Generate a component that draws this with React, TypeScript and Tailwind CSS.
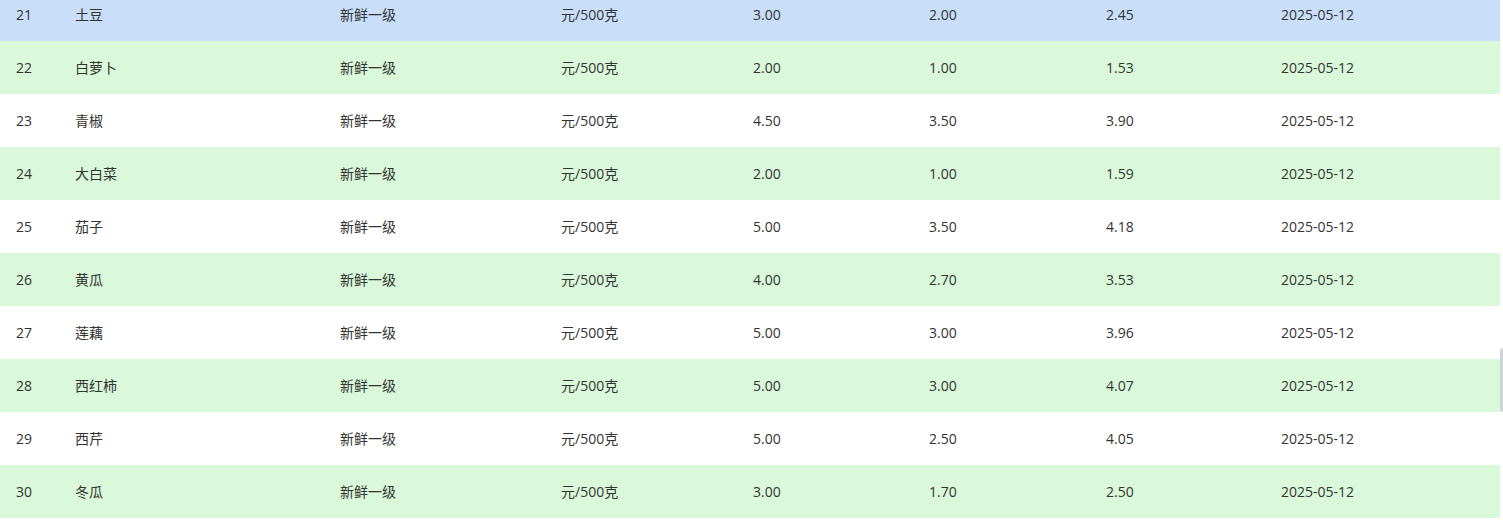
const rows = [
  { id: 21, name: "土豆", high: "3.00", low: "2.00", avg: "2.45" },
  { id: 22, name: "白萝卜", high: "2.00", low: "1.00", avg: "1.53" },
  { id: 23, name: "青椒", high: "4.50", low: "3.50", avg: "3.90" },
  { id: 24, name: "大白菜", high: "2.00", low: "1.00", avg: "1.59" },
  { id: 25, name: "茄子", high: "5.00", low: "3.50", avg: "4.18" },
  { id: 26, name: "黄瓜", high: "4.00", low: "2.70", avg: "3.53" },
  { id: 27, name: "莲藕", high: "5.00", low: "3.00", avg: "3.96" },
  { id: 28, name: "西红柿", high: "5.00", low: "3.00", avg: "4.07" },
  { id: 29, name: "西芹", high: "5.00", low: "2.50", avg: "4.05" },
  { id: 30, name: "冬瓜", high: "3.00", low: "1.70", avg: "2.50" },
];

const App = () => {
  return (
    <div
      className="relative h-[523px] w-[1503px] overflow-hidden bg-white text-[14px] text-[#333]"
      style={{ fontFamily: '"Open Sans", "Noto Sans CJK SC", sans-serif' }}
    >
      <div className="-mt-3 w-[1500px]">
        {rows.map((r, i) => {
          const bg =
            i === 0 ? "bg-[#c8def9]" : i % 2 === 1 ? "bg-[#daf8da]" : "bg-white";
          return (
            <div
              key={r.id}
              className={`grid h-[53px] grid-cols-[59px_265px_221px_192px_176px_177px_175px_1fr] items-center pl-4 ${bg}`}
            >
              <span>{r.id}</span>
              <span>{r.name}</span>
              <span>新鲜一级</span>
              <span>元/500克</span>
              <span>{r.high}</span>
              <span>{r.low}</span>
              <span>{r.avg}</span>
              <span>2025-05-12</span>
            </div>
          );
        })}
      </div>
      <div className="absolute right-0 top-[348px] h-[64px] w-[3px] rounded-l-sm bg-[#cfd3da]" />
    </div>
  );
};

export default App;
